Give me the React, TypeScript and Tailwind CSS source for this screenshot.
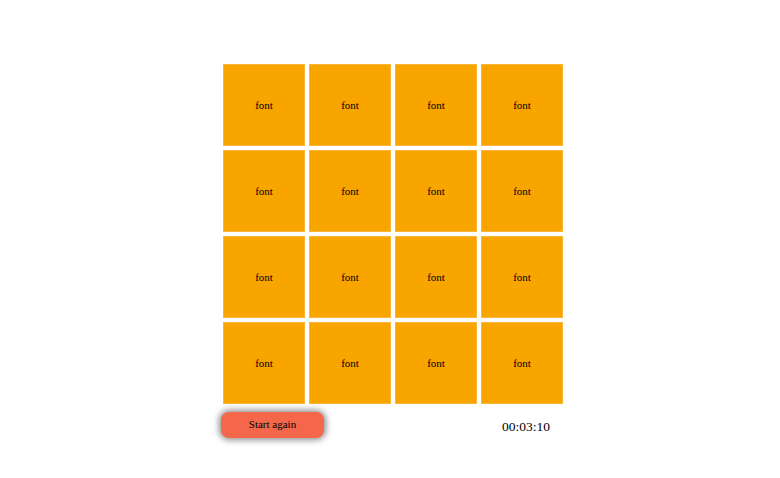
const tiles = Array.from({ length: 16 }, (_, i) => i);

export default function App() {
  return (
    <div className="flex min-h-[478px] w-full justify-center bg-white pl-[6px] pt-[62px] font-['Liberation_Serif',serif] text-black">
      <div className="w-[344px]">
        <div className="grid grid-cols-4">
          {tiles.map((t) => (
            <div
              key={t}
              className="m-[2px] flex h-[82px] w-[82px] items-center justify-center border border-[#fbb63a] bg-[#f8a500] text-[11px]"
            >
              font
            </div>
          ))}
        </div>
        <div className="mt-[6px] flex items-center justify-between">
          <button
            type="button"
            className="h-[26px] w-[103px] rounded-[8px] bg-[#f5674a] pb-[2px] text-[11px] text-black shadow-[0_0_6px_2px_rgba(0,0,0,0.45)]"
          >
            Start again
          </button>
          <span className="mr-[15px] mt-[4px] text-[13.5px]">00:03:10</span>
        </div>
      </div>
    </div>
  );
}
